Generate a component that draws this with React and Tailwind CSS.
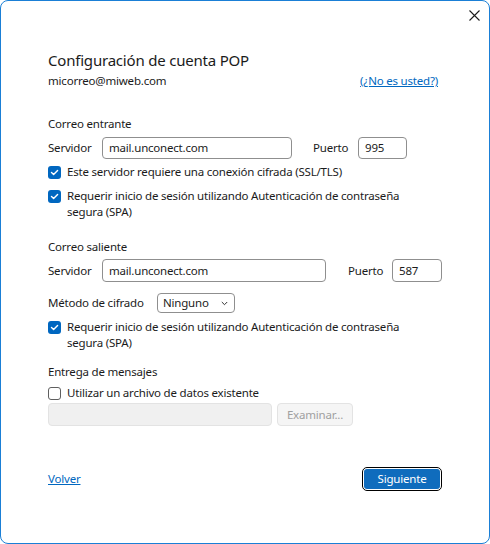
import React from "react";

const font = { fontFamily: '"Noto Sans", "Open Sans", Arial, sans-serif' };

const Check = ({ checked }) =>
  checked ? (
    <span className="flex h-[13px] w-[13px] shrink-0 items-center justify-center rounded-[3px] bg-[#0067c0]">
      <svg width="9" height="9" viewBox="0 0 9 9" fill="none">
        <path d="M1.5 4.6 L3.6 6.6 L7.6 2.4" stroke="#fff" strokeWidth="1.4" strokeLinecap="round" strokeLinejoin="round" />
      </svg>
    </span>
  ) : (
    <span className="block h-[13px] w-[13px] shrink-0 rounded-[3px] border border-[#5f5f5f] bg-white" />
  );

const CheckRow = ({ checked, children, className = "" }) => (
  <div className={`flex items-start gap-[6px] ${className}`}>
    <div className="mt-[2px] shrink-0">
      <Check checked={checked} />
    </div>
    <div className="leading-4">{children}</div>
  </div>
);

const TextBox = ({ value, className = "" }) => (
  <div
    className={`flex items-center rounded-[4px] border border-[#8f8f8f] bg-white pl-[6px] ${className}`}
  >
    {value}
  </div>
);

export default function App() {
  return (
    <div
      className="h-[544px] w-[490px] bg-white text-[11.5px] tracking-[-0.2px] text-[#1b1b1b]"
      style={font}
    >
      <div className="flex h-full w-full flex-col rounded-[8px] border border-[#1a7fd6] bg-white">
        {/* title bar */}
        <div className="flex h-[31px] justify-end pr-[9px] pt-[9px]">
          <button className="h-[11px] w-[11px]">
            <svg width="11" height="11" viewBox="0 0 11 11">
              <path d="M0.5 0.5 L10.5 10.5 M10.5 0.5 L0.5 10.5" stroke="#1b1b1b" strokeWidth="1.1" />
            </svg>
          </button>
        </div>

        <div className="flex flex-1 flex-col px-[47px]">
          <h1 className="mt-[17px] h-[22px] text-[15px] leading-[22px] font-normal">
            Configuración de cuenta POP
          </h1>
          <div className="mt-[2px] flex h-4 items-center justify-between leading-4">
            <span>micorreo@miweb.com</span>
            <a href="#" className="mr-[4px] text-[#0067c0] underline">
              (¿No es usted?)
            </a>
          </div>

          {/* incoming */}
          <div className="mt-[27px] h-4 leading-4">Correo entrante</div>
          <div className="mt-[5px] flex h-[22px] items-center">
            <span className="w-[54px]">Servidor</span>
            <TextBox value="mail.unconect.com" className="h-full w-[190px]" />
            <span className="ml-[21px] w-[45px]">Puerto</span>
            <TextBox value="995" className="h-full w-[49px]" />
          </div>
          <CheckRow checked className="mt-[5px]">
            Este servidor requiere una conexión cifrada (SSL/TLS)
          </CheckRow>
          <CheckRow checked className="mt-[8px]">
            Requerir inicio de sesión utilizando Autenticación de contraseña
            <br />
            segura (SPA)
          </CheckRow>

          {/* outgoing */}
          <div className="mt-[19px] h-4 leading-4">Correo saliente</div>
          <div className="mt-[4px] flex h-[23px] items-center">
            <span className="w-[54px]">Servidor</span>
            <TextBox value="mail.unconect.com" className="h-full w-[224px]" />
            <span className="ml-[22px] w-[44px]">Puerto</span>
            <TextBox value="587" className="h-full w-[50px]" />
          </div>
          <div className="mt-[11px] flex h-[20px] items-center">
            <span className="w-[109px]">Método de cifrado</span>
            <div className="flex h-full w-[78px] items-center justify-between rounded-[4px] border border-[#8f8f8f] bg-white pl-[5px] pr-[6px]">
              <span>Ninguno</span>
              <svg width="7" height="5" viewBox="0 0 7 5">
                <path d="M0.8 1 L3.5 3.7 L6.2 1" stroke="#333" strokeWidth="1" fill="none" />
              </svg>
            </div>
          </div>
          <CheckRow checked className="mt-[6px]">
            Requerir inicio de sesión utilizando Autenticación de contraseña
            <br />
            segura (SPA)
          </CheckRow>

          {/* delivery */}
          <div className="mt-[13px] h-4 leading-4">Entrega de mensajes</div>
          <CheckRow className="mt-[5px]">Utilizar un archivo de datos existente</CheckRow>
          <div className="mt-[2px] flex h-[23px] gap-[5px]">
            <div className="h-full w-[224px] rounded-[4px] border border-[#e3e3e3] bg-[#f0f0f0]" />
            <button className="h-full w-[76px] rounded-[4px] border border-[#e3e3e3] bg-[#f5f5f5] text-[#a0a0a0]">
              Examinar...
            </button>
          </div>

          {/* footer */}
          <div className="mt-[41px] flex h-[24px] items-center justify-between">
            <a href="#" className="text-[#0067c0] underline">
              Volver
            </a>
            <div className="h-full w-[80px] rounded-[5px] border border-black p-px">
              <button className="flex h-full w-full items-center justify-center rounded-[3px] bg-[#0f6cbd] text-white">
                Siguiente
              </button>
            </div>
          </div>
        </div>
      </div>
    </div>
  );
}
